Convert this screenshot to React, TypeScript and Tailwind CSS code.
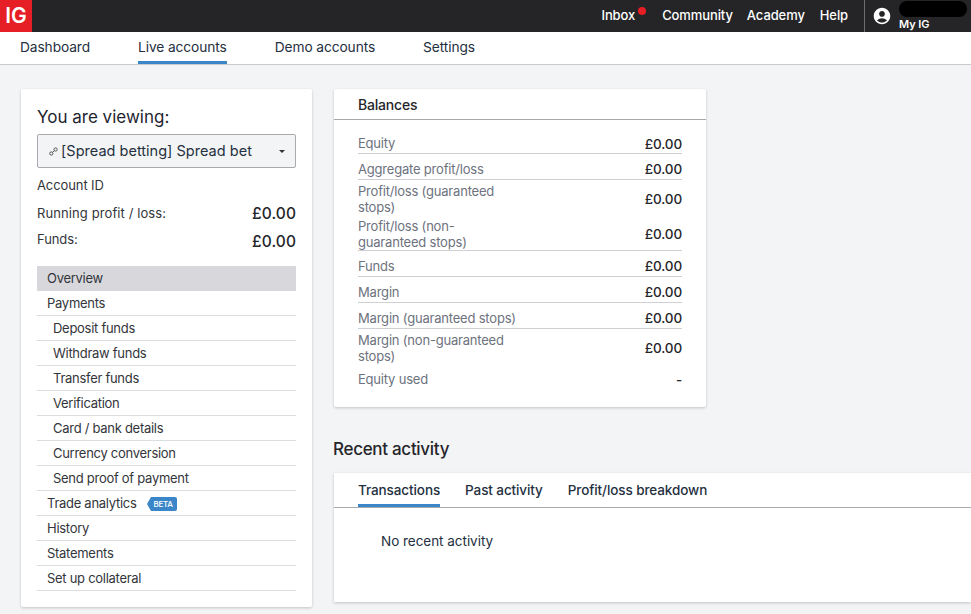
import React from "react";

const font = { fontFamily: "Inter, sans-serif" };

function Row({ label, value, line = true, h = 26 }: { label: React.ReactNode; value: string; line?: boolean; h?: number }) {
  const single = h === 26 && line;
  return (
    <div className={`flex items-center justify-between ${line ? "border-b border-[#cfd0d3]" : ""}`} style={{ height: h }}>
      <span className={`w-[150px] text-[13px] leading-[16px] tracking-[-0.2px] text-[#6d727e] ${single ? "pt-[4px]" : "pt-[2px]"}`}>{label}</span>
      <span className={`text-[13.5px] font-[450] tracking-[-0.15px] text-[#25252a] ${single ? "pt-[6px]" : h > 30 ? "pt-[2px]" : "pt-[4px]"}`}>{value}</span>
    </div>
  );
}

function MenuItem({ label, sub, children, active }: { label: string; sub?: boolean; children?: React.ReactNode; active?: boolean }) {
  return (
    <div className={`flex h-[25px] items-center text-[13px] tracking-[-0.28px] text-[#33353b] ${active ? "bg-[#d8d8dc]" : "border-b border-[#dcdddf] pt-[2px]"} ${sub ? "pl-4" : "pl-2.5"}`}>
      <span>{label}</span>
      {children}
    </div>
  );
}

export default function App() {
  return (
    <div className="h-[614px] w-[971px] overflow-hidden bg-[#f3f4f6]" style={font}>
      <header className="flex h-8 items-center bg-[#252527] text-white">
        <div className="flex h-8 w-8 items-center justify-center bg-[#e61e25] text-[21px] font-semibold">IG</div>
        <div className="ml-auto flex h-8 items-center text-[13px] font-medium tracking-[-0.1px]">
          <span className="relative mr-[27px]">
            Inbox
            <span className="absolute -right-[11px] top-[1px] h-2 w-2 rounded-full bg-[#e61e25]" />
          </span>
          <span className="mr-[14px]">Community</span>
          <span className="mr-[15px]">Academy</span>
          <span className="mr-4">Help</span>
          <div className="flex h-8 w-[107px] border-l border-[#6d6e72] pl-2">
            <svg width="18" height="18" viewBox="0 0 24 24" className="mt-[7px]" fill="white" style={{ transform: "scale(1.1)" }}>
              <path d="M12 2C6.48 2 2 6.48 2 12s4.48 10 10 10 10-4.48 10-10S17.52 2 12 2zm0 4c1.93 0 3.5 1.57 3.5 3.5S13.93 13 12 13s-3.5-1.57-3.5-3.5S10.07 6 12 6zm0 14c-2.03 0-4.43-.82-6.14-2.88a9.95 9.95 0 0 1 12.28 0C16.43 19.18 14.03 20 12 20z" />
            </svg>
            <div className="ml-2 flex flex-col">
              <div className="mt-[1px] h-[16px] w-[68px] rounded-[8px] bg-black" />
              <span className="text-[11px] font-semibold leading-[14px]">My IG</span>
            </div>
          </div>
        </div>
      </header>

      <nav className="flex h-[33px] gap-12 border-b border-[#c9cacd] bg-white pl-5 text-[13.75px] tracking-[-0.1px] text-[#25303f]">
        <span className="pt-[5px]">Dashboard</span>
        <span className="border-b-[3px] border-[#3a86c8] pt-[5px]">Live accounts</span>
        <span className="pt-[5px]">Demo accounts</span>
        <span className="pt-[5px]">Settings</span>
      </nav>

      <main className="flex items-start gap-[22px] pl-[21px] pt-6">
        <section className="h-[518px] w-[291px] shrink-0 rounded-[2px] bg-white px-4 pt-[17px] shadow-[0_1px_3px_rgba(0,0,0,0.2)]">
          <h2 className="text-[17px] leading-[22px] text-[#1e2530]">You are viewing:</h2>
          <div className="mt-[6px] flex h-[34px] items-center rounded-[2px] border border-[#a9aaae] bg-[#f3f4f6] pl-[11px] pr-[10px] text-[14.5px] tracking-[0.02px] text-[#25303f]">
            <svg width="9" height="9" viewBox="0 0 9 9" fill="none" stroke="#555" strokeWidth="1">
              <circle cx="2.3" cy="6.5" r="1.6" />
              <circle cx="6.6" cy="2.5" r="1.6" />
              <path d="M3.5 5.3 5.4 3.7" />
            </svg>
            <span className="ml-[3px]">[Spread betting] Spread bet</span>
            <span className="ml-auto h-0 w-0 border-x-[3px] border-t-[3px] border-x-transparent border-t-[#333]" />
          </div>
          <div className="mt-[9px] flex h-[18px] items-center text-[13px] tracking-[-0.1px] text-[#33353b]">Account ID</div>
          <div className="mt-[9px] flex h-[18px] items-center justify-between pt-[1px] text-[13px] tracking-[0.1px] text-[#33353b]">
            <span>Running profit / loss:</span>
            <span className="pt-[1px] text-[15.5px] font-[450] tracking-[0.1px] text-[#25252a]">£0.00</span>
          </div>
          <div className="mt-[9px] flex h-[18px] items-center justify-between text-[13px] tracking-[-0.1px] text-[#33353b]">
            <span>Funds:</span>
            <span className="pt-[3px] text-[15.5px] font-[450] tracking-[0.1px] text-[#25252a]">£0.00</span>
          </div>
          <div className="mt-[17px]">
            <MenuItem label="Overview" active />
            <MenuItem label="Payments" />
            <MenuItem label="Deposit funds" sub />
            <MenuItem label="Withdraw funds" sub />
            <MenuItem label="Transfer funds" sub />
            <MenuItem label="Verification" sub />
            <MenuItem label="Card / bank details" sub />
            <MenuItem label="Currency conversion" sub />
            <MenuItem label="Send proof of payment" sub />
            <MenuItem label="Trade analytics">
              <span className="relative ml-[14px] flex h-[14px] items-center rounded-r-[2px] bg-[#3a86c8] pl-[3px] pr-[4px] text-[8px] font-medium text-white">
                <span className="absolute -left-[4px] top-0 h-0 w-0 border-y-[7px] border-r-[4px] border-y-transparent border-r-[#3a86c8]" />
                BETA
              </span>
            </MenuItem>
            <MenuItem label="History" />
            <MenuItem label="Statements" />
            <MenuItem label="Set up collateral" />
          </div>
        </section>

        <div className="flex min-w-0 flex-1 flex-col">
          <section className="w-[372px] rounded-[2px] bg-white shadow-[0_1px_3px_rgba(0,0,0,0.2)]">
            <h3 className="flex h-[31px] items-center border-b border-[#a9aaae] pl-6 text-[14px] font-medium tracking-[-0.2px] text-[#25252a]">Balances</h3>
            <div className="h-[287px] px-6 pt-[11px]">
              <Row label="Equity" value="£0.00" h={23} />
              <Row label="Aggregate profit/loss" value="£0.00" />
              <Row label="Profit/loss (guaranteed stops)" value="£0.00" h={36} line={false} />
              <Row label="Profit/loss (non-guaranteed stops)" value="£0.00" h={35} />
              <Row label="Funds" value="£0.00" />
              <Row label="Margin" value="£0.00" />
              <Row label={<span className="whitespace-nowrap">Margin (guaranteed stops)</span>} value="£0.00" />
              <Row label="Margin (non-guaranteed stops)" value="£0.00" h={36} line={false} />
              <Row label="Equity used" value="-" h={26} line={false} />
            </div>
          </section>
          <h2 className="-ml-px mt-[31px] text-[17px] font-medium leading-[22px] tracking-[-0.3px] text-[#25252a]">Recent activity</h2>
          <section className="mt-[13px] h-[129px] bg-white shadow-[0_1px_3px_rgba(0,0,0,0.2)]">
            <div className="flex h-[35px] gap-[25px] border-b border-[#a9aaae] pl-6 text-[13.5px] font-medium tracking-[-0.1px] text-[#25303f]">
              <span className="border-b-[3px] border-[#3a86c8] pt-[7px]">Transactions</span>
              <span className="pt-[7px]">Past activity</span>
              <span className="pt-[7px]">Profit/loss breakdown</span>
            </div>
            <p className="pl-[47px] pt-[24px] text-[13.5px] leading-[18px] tracking-[-0.03px] text-[#25303f]">No recent activity</p>
          </section>
        </div>
      </main>
    </div>
  );
}
